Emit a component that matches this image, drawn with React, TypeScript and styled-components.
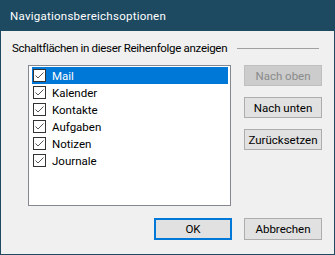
import React from "react";
import styled, { createGlobalStyle } from "styled-components";

const Global = createGlobalStyle`
  html, body { margin: 0; padding: 0; background: #f0f0f0; }
  * { box-sizing: border-box; }
`;

const FONT = `Roboto, "Liberation Sans", sans-serif`;

const Window = styled.div`
  width: 335px;
  height: 255px;
  display: flex;
  flex-direction: column;
  background: #f0f0f0;
  border: 1px solid #1d4a61;
  border-top: none;
  font-family: ${FONT};
  font-size: 11.5px;
  color: #000;
`;

const TitleBar = styled.div`
  height: 31px;
  flex: none;
  background: #1d4a61;
  color: #fff;
  display: flex;
  align-items: center;
  padding-left: 9px;
  font-size: 11.5px;
  letter-spacing: 0.25px;
`;

const Body = styled.div`
  flex: 1;
  display: flex;
  flex-direction: column;
  padding: 10px 12px 0 11px;
`;

const GroupHeader = styled.div`
  height: 14px;
  display: flex;
  align-items: center;
  gap: 10px;
  padding-right: 3px;
  white-space: nowrap;
`;

const GroupLabel = styled.span`
  letter-spacing: -0.3px;
`;

const Rule = styled.div`
  flex: 1;
  height: 1px;
  background: #a0a0a0;
`;

const MainRow = styled.div`
  display: flex;
  gap: 13px;
  margin-top: 10px;
  padding-left: 16px;
`;

const ListBox = styled.ul`
  width: 203px;
  height: 141px;
  margin: 0;
  padding: 1px 2px 1px 3px;
  list-style: none;
  background: #fff;
  border: 1px solid #828790;
`;

const Row = styled.li<{ $selected?: boolean }>`
  height: 17px;
  display: flex;
  align-items: center;
  padding-left: 1px;
  gap: 6px;
  background: ${(p) => (p.$selected ? "#0078d7" : "transparent")};
  color: ${(p) => (p.$selected ? "#fff" : "#000")};
`;

const Check = styled.span`
  width: 13px;
  height: 13px;
  flex: none;
  border: 1px solid #333;
  background: #fff;
  display: flex;
  align-items: center;
  justify-content: center;
`;

const ButtonColumn = styled.div`
  display: flex;
  flex-direction: column;
  gap: 11px;
`;

const Button = styled.button<{ $default?: boolean; $h?: number }>`
  width: 78px;
  height: ${(p) => p.$h ?? 21}px;
  margin: 0;
  padding: 0;
  font-family: ${FONT};
  font-size: 11.5px;
  color: #000;
  background: #e1e1e1;
  border: ${(p) => (p.$default ? "2px solid #0078d7" : "1px solid #adadad")};
  &:disabled {
    background: #cccccc;
    border-color: #bfbfbf;
    color: #8a8a8a;
  }
`;

const Footer = styled.div`
  display: flex;
  justify-content: flex-end;
  gap: 12px;
  margin-top: 12px;
`;

const CheckMark = () => (
  <svg width="11" height="11" viewBox="0 0 11 11">
    <polyline points="1.5,5.5 4,8 9.5,2.5" fill="none" stroke="#555" strokeWidth="1" />
  </svg>
);

const items = ["Mail", "Kalender", "Kontakte", "Aufgaben", "Notizen", "Journale"];

export default function App() {
  return (
    <>
      <Global />
      <Window>
        <TitleBar>Navigationsbereichsoptionen</TitleBar>
        <Body>
          <GroupHeader>
            <GroupLabel>Schaltflächen in dieser Reihenfolge anzeigen</GroupLabel>
            <Rule />
          </GroupHeader>
          <MainRow>
            <ListBox>
              {items.map((it, i) => (
                <Row key={it} $selected={i === 0}>
                  <Check>
                    <CheckMark />
                  </Check>
                  {it}
                </Row>
              ))}
            </ListBox>
            <ButtonColumn>
              <Button disabled>Nach oben</Button>
              <Button>Nach unten</Button>
              <Button>Zurücksetzen</Button>
            </ButtonColumn>
          </MainRow>
          <Footer>
            <Button $default $h={22}>OK</Button>
            <Button $h={22}>Abbrechen</Button>
          </Footer>
        </Body>
      </Window>
    </>
  );
}
